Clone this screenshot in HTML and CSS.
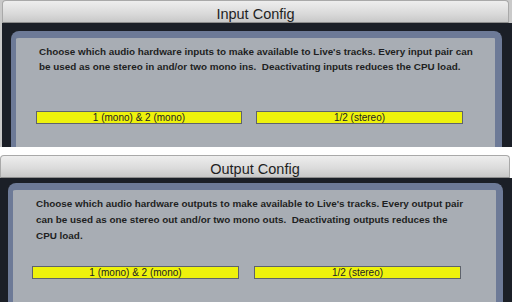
FILE: index.html
```html
<!DOCTYPE html>
<html>
<head>
<meta charset="utf-8">
<link rel="stylesheet" href="styles.css">
</head>
<body>
<section class="win win-in">
  <header class="titlebar">Input Config</header>
  <div class="frame">
    <div class="panel">
      <p class="desc">Choose which audio hardware inputs to make available to Live's tracks. Every input pair can<br>be used as one stereo in and/or two mono ins.&nbsp; Deactivating inputs reduces the CPU load.</p>
      <div class="fields">
        <div class="field">1 (mono) &amp; 2 (mono)</div>
        <div class="field">1/2 (stereo)</div>
      </div>
    </div>
  </div>
</section>
<section class="win win-out">
  <header class="titlebar">Output Config</header>
  <div class="frame">
    <div class="panel">
      <p class="desc">Choose which audio hardware outputs to make available to Live's tracks. Every output pair<br>can be used as one stereo out and/or two mono outs.&nbsp; Deactivating outputs reduces the<br>CPU load.</p>
      <div class="fields">
        <div class="field">1 (mono) &amp; 2 (mono)</div>
        <div class="field">1/2 (stereo)</div>
      </div>
    </div>
  </div>
</section>
</body>
</html>
```
FILE: styles.css
```css
html, body {
  margin: 0;
  padding: 0;
  background: #ffffff;
  width: 512px;
  height: 302px;
  overflow: hidden;
  font-family: "Liberation Sans", Arial, sans-serif;
}
.win {
  display: flex;
  flex-direction: column;
  overflow: hidden;
}
.titlebar {
  height: 23px;
  box-sizing: border-box;
  display: flex;
  align-items: center;
  justify-content: center;
  font-size: 14.5px;
  color: #1f1f1f;
  background: linear-gradient(#eeeeee, #dadada 60%, #c8c8c8);
  border: 1px solid #a9a9a9;
  border-bottom: 1px solid #8d8d8d;
  border-radius: 4px 4px 0 0;
  padding-top: 4px;
}
.frame {
  background: #1b1f27;
  flex: 1;
  display: flex;
}
.panel {
  flex: 1;
  background: #a8adb4;
  border-style: solid;
  border-color: #6d7a97;
  border-width: 7px 7px 0 5px;
  border-radius: 8px 8px 0 0;
}
.desc {
  margin: 0;
  font-size: 9.9px;
  font-weight: bold;
  color: #1e1f22;
  white-space: nowrap;
}
.fields {
  display: flex;
  gap: 14px;
}
.field {
  height: 13px;
  box-sizing: border-box;
  background: #eef20c;
  border: 1px solid #5e636c;
  font-size: 10px;
  line-height: 11px;
  color: #222;
  text-align: center;
}
/* input window */
.win-in { height: 147px; padding-left: 2px; background: #c9c9c9; }
.win-in .titlebar { width: 507px; }
.win-in .frame { padding: 8px 10px 0 9px; }
.win-in .panel { padding: 7px 0 0 20px; }
.win-in .desc { line-height: 14.5px; padding-left: 3px; }
.win-in .fields { margin-top: 37px; }
.win-in .field:first-child { width: 206px; }
.win-in .field:last-child { width: 207px; }
/* output window */
.win-out { height: 147px; margin-top: 8px; }
.win-out .titlebar { width: 510px; }
.win-out .frame { padding: 5px 9px 0 8px; }
.win-out .panel { padding: 6px 0 0 19px; }
.win-out .desc { line-height: 16px; padding-left: 4px; }
.win-out .fields { margin-top: 22px; gap: 15px; }
.win-out .field:first-child { width: 207px; }
.win-out .field:last-child { width: 207px; }
```
